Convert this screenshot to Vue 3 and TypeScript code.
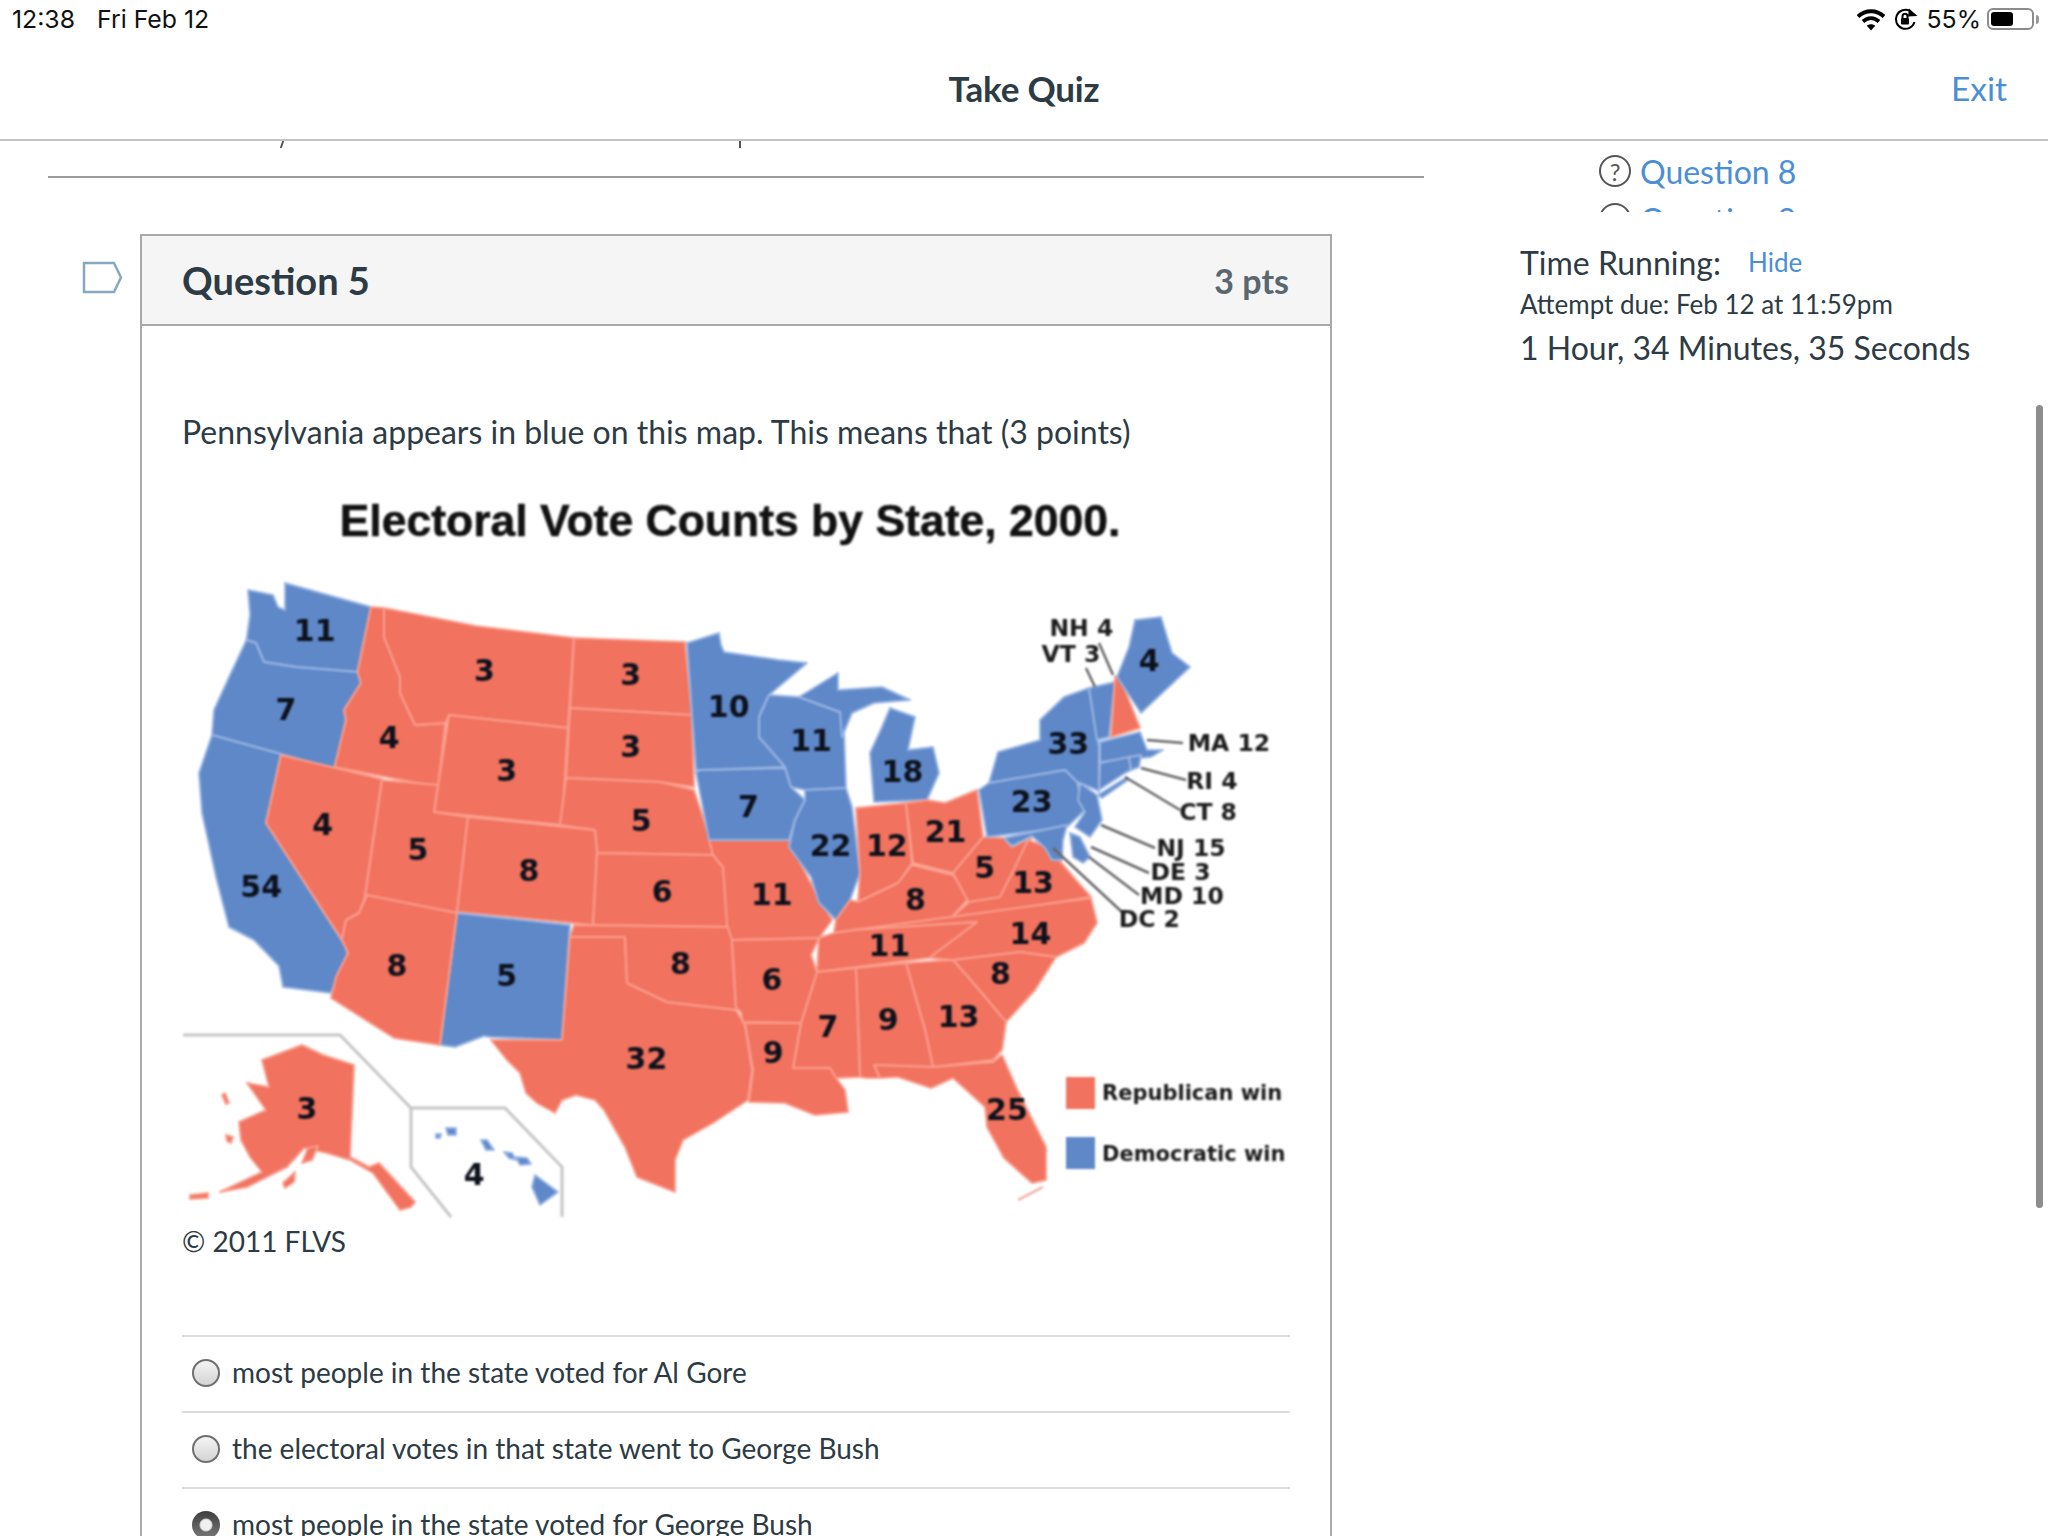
<script setup lang="ts">
interface State { party: 'r' | 'b'; points: string }
interface Label { text: string; x: number; y: number }

const S = 1.306
const toLabels = (rows: [string, number, number][]): Label[] =>
  rows.map(([text, x, y]) => ({ text, x: x * S, y: y * S }))

const states: State[] = [
  { party: 'b', points: '248,590 273,595 278,607 285,610 285,583 371,607 357.5,672 296,667 264,662 256,643 246.5,640 250,615' },
  { party: 'b', points: '246.5,640 256,643 264,662 296,667 357.5,672 361,683 344,710 346,720 334.5,769 212,735 214,710 230,675' },
  { party: 'b', points: '212,735 281,754 266,823 346,947 348,957 331,993 283,987 279,966 254,940 229,927 216,877 208,840 202,813 199,773' },
  { party: 'r', points: '281,755 382,779 365,897 359,913 346,920 342,940 266,823' },
  { party: 'r', points: '371,607 384,608 384,637 400,677 400,693 415,725 445.5,723 438,787 334.5,767 346,720 344,710 361,683 357.5,672' },
  { party: 'r', points: '384,608 476,626 574,638 568,728 449,715 445.5,723 415,725 400,693 400,677 384,637' },
  { party: 'r', points: '449,715 568,728 562,825 434,812' },
  { party: 'r', points: '574,638 685,642 692,715 570,708' },
  { party: 'r', points: '570,708 692,715 694,787 660,782 566,778' },
  { party: 'r', points: '566,778 660,782 694,790 711,842 713,855 597,853 595,830 560,825' },
  { party: 'r', points: '382,780 438,785 434,812 468,817 457,913 365,897' },
  { party: 'r', points: '468,817 595,830 597,853 593,925 457,912' },
  { party: 'r', points: '597,853 713,855 723,867 729,927 593,925' },
  { party: 'b', points: '457,913 570,925 562,1040 490,1037 484,1036 455,1047 440,1045' },
  { party: 'r', points: '367,895 457,913 440,1045 394,1038 331,998 336,977 348,953 342,940 346,920 359,913' },
  { party: 'r', points: '570,937 625,937 627,983 667,1002 736,1010 745,1025 752,1070 748,1100 713,1123 683,1140 675,1160 675,1192 637,1177 625,1147 604,1110 595,1100 576,1095 562,1100 555,1113 537,1103 526,1093 520,1073 507,1060 491,1040 562,1040' },
  { party: 'r', points: '574,925 729,927 732,940 736,1010 667,1002 627,983 625,937 570,937' },
  { party: 'r', points: '709,840 789,840 809,880 832,920 819,938 732,940 727,925 723,867 713,855' },
  { party: 'b', points: '696,772 700,770 785,768 791,787 805,800 795,820 789,840 714,840 709,840' },
  { party: 'b', points: '687,643 719,633 721,645 724,652 779,660 807,663 769,695 759,717 759,737 785,767 700,770 696,770 692,715' },
  { party: 'b', points: '769,695 799,697 840,712 844,730 846,788 805,790 791,787 785,767 759,737 759,717' },
  { party: 'b', points: '799,697 838,673 838,690 882,687 910,700 874,703 852,713 842,737 840,712' },
  { party: 'b', points: '890,708 915,717 908,750 933,747 939,773 927,800 874,802 870,753 882,727' },
  { party: 'b', points: '805,790 846,788 852,807 860,873 850,900 836,920 819,903 811,877 789,847 795,820 805,800' },
  { party: 'r', points: '856,808 906,803 912,863 898,883 858,902 860,873' },
  { party: 'r', points: '906,803 927,800 945,803 977,790 983,837 969,857 953,873 913,863' },
  { party: 'r', points: '850,900 858,902 898,883 912,865 953,875 969,898 949,920 854,930 834,933 836,920' },
  { party: 'r', points: '953,873 983,837 1004,838 1012,847 1032,837 1012,873 1004,897 969,903' },
  { party: 'r', points: '949,920 969,902 1000,897 1012,873 1028,840 1048,847 1076,880 1091,897' },
  { party: 'r', points: '854,930 1091,898 1097,923 1084,943 1056,957 1020,952 953,960 929,958 977,922' },
  { party: 'r', points: '819,938 834,933 854,930 977,922 929,958 817,972' },
  { party: 'r', points: '953,960 1020,952 1056,957 1035,990 1006,1022 975,985' },
  { party: 'r', points: '906,963 953,960 975,985 1006,1022 1002,1050 993,1060 933,1067 925,1030' },
  { party: 'r', points: '856,968 906,963 925,1030 933,1067 874,1065 880,1078 866,1078 860,1077' },
  { party: 'r', points: '817,972 856,968 860,1077 836,1078 830,1068 793,1068 801,1023' },
  { party: 'r', points: '732,940 819,938 811,955 817,972 801,1023 743,1022 741,1012 736,1008' },
  { party: 'r', points: '745,1023 801,1023 793,1068 830,1068 836,1078 845,1090 848,1112 815,1115 785,1103 749,1102 753,1070' },
  { party: 'r', points: '874,1065 933,1067 993,1062 1002,1055 1016,1087 1046,1147 1046,1180 1032,1183 1004,1158 987,1127 985,1107 953,1078 931,1088 898,1077 880,1078' },
  { party: 'b', points: '1040,720 1064,697 1089,688 1099,747 1099,792 1097,790 1077,782 1065,770 989,783 998,752 1040,740' },
  { party: 'b', points: '1089,688 1115,682 1109,737 1097,740' },
  { party: 'r', points: '1115,677 1119,675 1140,728 1111,737' },
  { party: 'b', points: '1135,620 1161,617 1172,653 1190,667 1141,713 1117,677 1129,647' },
  { party: 'b', points: '1100,742 1140,732 1147,750 1163,750 1151,757 1100,762' },
  { party: 'b', points: '1100,763 1129,757 1131,770 1125,773 1099,790' },
  { party: 'b', points: '1129,757 1141,755 1139,767 1131,770' },
  { party: 'b', points: '979,790 989,783 1065,770 1077,782 1085,810 1067,827 987,837' },
  { party: 'b', points: '1080,783 1097,795 1102,820 1090,837 1075,827 1085,812 1078,800' },
  { party: 'b', points: '1004,838 1067,825 1063,840 1062,860 1052,860 1045,848 1032,836 1012,846' },
  { party: 'b', points: '1070,833 1080,837 1090,857 1083,863 1073,857' },
  { party: 'b', points: '1098,795 1127,777 1128,780 1102,798' },
  { party: 'r', points: '262,1060 302,1045 323,1055 354,1065 350,1157 369,1167 379,1163 415,1202 411,1207 400,1210 373,1173 350,1160 327,1153 304,1148 287,1167 247,1187 220,1192 262,1172 250,1157 241,1140 239,1122 266,1110 247,1083 269,1087' },
  { party: 'r', points: '222,1095 225,1093 229,1103 226,1104' },
  { party: 'r', points: '226,1135 233,1137 231,1143 227,1141' },
  { party: 'r', points: '190,1195 208,1193 208,1198 190,1199' },
  { party: 'r', points: '283,1183 295,1172 294,1182 285,1188' },
  { party: 'r', points: '302,1163 308,1148 318,1146 312,1160' },
  { party: 'b', points: '446,1128 456,1128 456,1135 448,1135' },
  { party: 'b', points: '436,1134 441,1134 440,1138 436,1138' },
  { party: 'b', points: '481,1140 487,1140 494,1150 486,1150' },
  { party: 'b', points: '504,1152 512,1153 516,1160 509,1158' },
  { party: 'b', points: '516,1157 527,1158 531,1164 520,1165' },
  { party: 'b', points: '535,1175 558,1192 540,1205 532,1187' }
]

const insetLines: string[] = [
  '182,1035 340,1035 411,1108 505,1108 562,1167 562,1217',
  '411,1108 411,1167 451,1217'
]

const leaders: string[] = [
  '1147,740 1183,743', '1141,768 1186,780', '1125,777 1180,810', '1101,825 1155,848',
  '1091,847 1149,873', '1089,857 1139,895', '1053,848 1123,913', '1099,643 1113,675', '1086,668 1095,687'
]

const votes = toLabels([
  ['11', 241, 483], ['7', 219, 544], ['3', 371, 514], ['3', 483, 517], ['4', 298, 565], ['3', 388, 590],
  ['3', 483, 572], ['10', 558, 541], ['11', 621, 567], ['18', 691, 591], ['4', 247, 632], ['5', 320, 651],
  ['8', 405, 667], ['5', 491, 629], ['7', 573, 618], ['54', 200, 679], ['6', 507, 683], ['11', 591, 685],
  ['22', 636, 648], ['12', 679, 648], ['21', 724, 637], ['5', 754, 665], ['13', 791, 676], ['8', 701, 689],
  ['14', 789, 715], ['11', 681, 724], ['8', 304, 740], ['5', 388, 747], ['8', 521, 738], ['6', 591, 750],
  ['8', 766, 746], ['7', 634, 786], ['9', 680, 781], ['13', 734, 779], ['9', 592, 806], ['32', 495, 811],
  ['25', 771, 850], ['3', 235, 849], ['4', 363, 900], ['23', 790, 614], ['33', 818, 570], ['4', 880, 506]
])

const callouts = toLabels([
  ['NH 4', 828, 481], ['VT 3', 820, 501], ['MA 12', 941, 569], ['RI 4', 928, 598], ['CT 8', 925, 622],
  ['NJ 15', 912, 649], ['DE 3', 904, 668], ['MD 10', 905, 686], ['DC 2', 880, 704]
])

const answers = [
  { text: 'most people in the state voted for Al Gore', selected: false },
  { text: 'the electoral votes in that state went to George Bush', selected: false },
  { text: 'most people in the state voted for George Bush', selected: true }
]
</script>

<template>
  <div class="screen">
    <div class="status">
      <div class="clock"><span>12:38</span><span>Fri Feb 12</span></div>
      <div class="status-right">
        <svg width="30" height="24" viewBox="0 0 30 24" class="wifi">
          <path d="M2 9.5C9.5 2.5 20.5 2.5 28 9.5" />
          <path d="M7 14.5C12 10 18 10 23 14.5" />
          <path d="M15 23.5L10.8 18.8C13.2 16.8 16.8 16.8 19.2 18.8Z" class="wifi-dot" />
        </svg>
        <svg width="26" height="24" viewBox="0 0 26 24" class="rotlock">
          <path d="M17 4A9.5 9.5 0 1 0 21.5 15" />
          <path d="M16 1.5L24.5 9L15 9.5Z" class="solid" />
          <rect x="8" y="11" width="8" height="6.5" rx="1" class="solid" />
          <path d="M9.5 11V9.2a2.5 2.5 0 0 1 5 0V11" />
        </svg>
        <span class="pct">55%</span>
        <div class="battery"><div class="battery-fill"></div></div>
        <div class="battery-nub"></div>
      </div>
    </div>

    <header class="topbar">
      <div></div>
      <h1 class="page-title">Take Quiz</h1>
      <a class="exit">Exit</a>
    </header>

    <div class="content">
      <main class="main">
        <span class="sliver sliver-a"></span>
        <span class="sliver sliver-b"></span>
        <div class="rule"></div>
        <div class="question-row">
          <svg class="tag" width="41" height="33" viewBox="0 0 41 33">
            <path d="M2 2H32L39 16.5L32 31H2Z" />
          </svg>
          <section class="card">
            <div class="card-head">
              <h2 class="q-title">Question 5</h2>
              <span class="q-pts">3 pts</span>
            </div>
            <div class="card-body">
              <p class="prompt">Pennsylvania appears in blue on this map. This means that (3 points)</p>
              <svg class="map" width="1110" height="738" viewBox="183 480 1110 738">
                <text x="730" y="536" text-anchor="middle" class="map-title">Electoral Vote Counts by State, 2000.</text>
                <polyline v-for="(l, i) in insetLines" :key="'inset' + i" :points="l" class="inset" />
                <polygon
                  v-for="(s, i) in states"
                  :key="'state' + i"
                  :points="s.points"
                  :class="s.party === 'r' ? 'rep' : 'dem'"
                />
                <polyline points="1018,1200 1043,1187" class="keys" />
                <polyline v-for="(l, i) in leaders" :key="'lead' + i" :points="l" class="leader" />
                <text
                  v-for="(v, i) in votes"
                  :key="'vote' + i"
                  :x="v.x"
                  :y="v.y + 10"
                  text-anchor="middle"
                  class="vote"
                >{{ v.text }}</text>
                <text
                  v-for="(c, i) in callouts"
                  :key="'call' + i"
                  :x="c.x"
                  :y="c.y + 8"
                  text-anchor="middle"
                  class="callout"
                >{{ c.text }}</text>
                <rect x="1066" y="1077" width="29" height="32" class="rep-box" />
                <rect x="1066" y="1137" width="29" height="32" class="dem-box" />
                <text x="1102" y="1100" class="legend">Republican win</text>
                <text x="1102" y="1161" class="legend">Democratic win</text>
              </svg>
              <p class="credit">© 2011 FLVS</p>
              <ul class="answers">
                <li v-for="a in answers" :key="a.text" class="answer">
                  <span class="radio" :class="{ checked: a.selected }"></span>
                  <span>{{ a.text }}</span>
                </li>
              </ul>
            </div>
          </section>
        </div>
      </main>

      <aside class="side">
        <div class="qlist">
          <div class="qitem">
            <span class="qicon">?</span><a>Question 8</a>
          </div>
          <div class="qitem">
            <span class="qicon">?</span><a>Question 9</a>
          </div>
        </div>
        <div class="timer">
          <div class="timer-top"><span>Time Running:</span><a class="hide">Hide</a></div>
          <div class="due">Attempt due: Feb 12 at 11:59pm</div>
          <div class="left">1 Hour, 34 Minutes, 35 Seconds</div>
        </div>
      </aside>
    </div>
    <div class="scrollbar"></div>
  </div>
</template>

<style>
html, body { margin: 0; background: #fff; }
</style>

<style scoped>
.screen {
  position: relative;
  width: 2048px;
  height: 1536px;
  overflow: hidden;
  background: #fff;
  color: #2d3b45;
  font-family: Lato, "Open Sans", sans-serif;
}
a { color: #4a8fd6; }
.status {
  height: 38px;
  display: flex;
  justify-content: space-between;
  align-items: center;
  padding: 0 9px 0 12px;
  color: #111;
  font-family: Inter, Roboto, sans-serif;
  font-size: 24.8px;
}
.clock { display: flex; gap: 22px; }
.status-right { display: flex; align-items: center; }
.wifi { margin-right: 7px; }
.wifi path { fill: none; stroke: #000; stroke-width: 3.8; }
.wifi .wifi-dot { fill: #000; stroke: none; }
.rotlock { margin-right: 8px; }
.rotlock path { fill: none; stroke: #000; stroke-width: 2; }
.rotlock .solid { fill: #000; stroke: none; }
.pct { margin-right: 6px; }
.battery {
  width: 47px;
  height: 22px;
  box-sizing: border-box;
  border: 2px solid #8c8c8c;
  border-radius: 6px;
  padding: 2px;
}
.battery-fill { width: 22px; height: 100%; background: #000; border-radius: 3px; }
.battery-nub { width: 3px; height: 9px; margin-left: 2px; background: #999; border-radius: 0 3px 3px 0; }
.topbar {
  height: 101px;
  box-sizing: content-box;
  border-bottom: 2px solid #c4c4c4;
  display: grid;
  grid-template-columns: 1fr auto 1fr;
  align-items: center;
}
.page-title { margin: 0 0 1px; font-size: 35px; font-weight: 700; letter-spacing: -0.2px; }
.exit { justify-self: end; padding-right: 41px; font-size: 33.5px; margin-bottom: 1px; }
.content { display: flex; }
.main { position: relative; width: 1424px; padding-left: 48px; flex: none; box-sizing: border-box; padding-top: 35px; }
.sliver { position: absolute; top: 0; width: 2px; height: 7px; background: #555; }
.sliver-a { left: 281px; transform: skewX(-18deg); }
.sliver-b { left: 739px; }
.rule { height: 2px; background: #9b9b9b; }
.question-row { display: flex; padding-top: 56px; }
.tag { flex: none; margin: 27px 17px 0 34px; }
.tag path { fill: none; stroke: #86a9bf; stroke-width: 2.5; }
.card {
  width: 1192px;
  flex: none;
  box-sizing: border-box;
  border: 2px solid #a9a9a9;
  border-bottom: none;
}
.card-head {
  height: 88px;
  box-sizing: content-box;
  background: #f5f5f5;
  border-bottom: 2px solid #a9a9a9;
  display: flex;
  align-items: center;
  justify-content: space-between;
  padding: 0 41px 0 40px;
}
.q-title { margin: 0; font-size: 38px; font-weight: 700; }
.q-pts { font-size: 34px; font-weight: 700; color: #5b6770; }
.card-body { padding: 86px 40px 0; }
.prompt { margin: 0; font-size: 32px; line-height: 40px; }
.map { display: block; margin: 28px 0 0 1px; filter: blur(0.8px); }
.map-title { font: 700 44.5px "Liberation Sans", sans-serif; fill: #111; stroke: #111; stroke-width: 0.5px; }
.rep { fill: #f1725e; stroke: #fb9e8e; stroke-width: 2; stroke-linejoin: round; }
.dem { fill: #5f88c8; stroke: #9ab6e4; stroke-width: 2; stroke-linejoin: round; }
.rep-box { fill: #f1725e; }
.dem-box { fill: #5f88c8; }
.keys { fill: none; stroke: #f4a79a; stroke-width: 2; }
.inset { fill: none; stroke: #c6c6c6; stroke-width: 3; }
.leader { fill: none; stroke: #666; stroke-width: 2.5; }
.vote { font: 700 30px "DejaVu Sans", sans-serif; fill: #0c111c; }
.callout { font: 700 23.5px "DejaVu Sans", sans-serif; fill: #1c1c1c; }
.legend { font: 700 21px "DejaVu Sans", sans-serif; fill: #1c1c1c; }
.credit { margin: 0; padding-top: 3px; font-size: 28px; line-height: 40px; }
.answers { list-style: none; margin: 74px 0 0; padding: 0; }
.answer {
  height: 74px;
  box-sizing: content-box;
  border-top: 2px solid #dcdcdc;
  display: flex;
  align-items: center;
  gap: 12px;
  padding-left: 10px;
  font-size: 28px;
}
.answer > span:last-child { margin-bottom: 5px; }
.radio {
  width: 28px;
  height: 28px;
  box-sizing: border-box;
  flex: none;
  border-radius: 50%;
  border: 2px solid #6f6f6f;
  background: linear-gradient(#f4f4f4, #d4d4d4);
  margin-bottom: 2px;
}
.radio.checked {
  border: 0;
  background: radial-gradient(circle at 50% 50%, #f0f0f0 0 5px, #c8c8c8 6px, transparent 7px),
    linear-gradient(#3e3e3e, #7a7a7a);
}
.side { flex: 1; padding-left: 96px; }
.qlist { height: 71px; overflow: hidden; padding-left: 79px; }
.qitem { height: 48px; display: flex; align-items: center; gap: 9px; font-size: 32px; margin-top: 6px; margin-bottom: -6px; }
.qicon {
  width: 32px;
  height: 32px;
  box-sizing: border-box;
  border: 2px solid #555;
  border-radius: 50%;
  display: flex;
  align-items: center;
  justify-content: center;
  font-size: 24px;
  color: #555;
}
.timer { padding-top: 29px; }
.timer-top { display: flex; align-items: center; gap: 27px; font-size: 32px; line-height: 43px; }
.hide { font-size: 26px; }
.due { font-size: 26px; line-height: 40px; }
.left { font-size: 32px; line-height: 48px; }
.scrollbar {
  position: absolute;
  left: 2036px;
  top: 405px;
  width: 7px;
  height: 803px;
  background: #8d8d8d;
  border-radius: 4px;
}
</style>
